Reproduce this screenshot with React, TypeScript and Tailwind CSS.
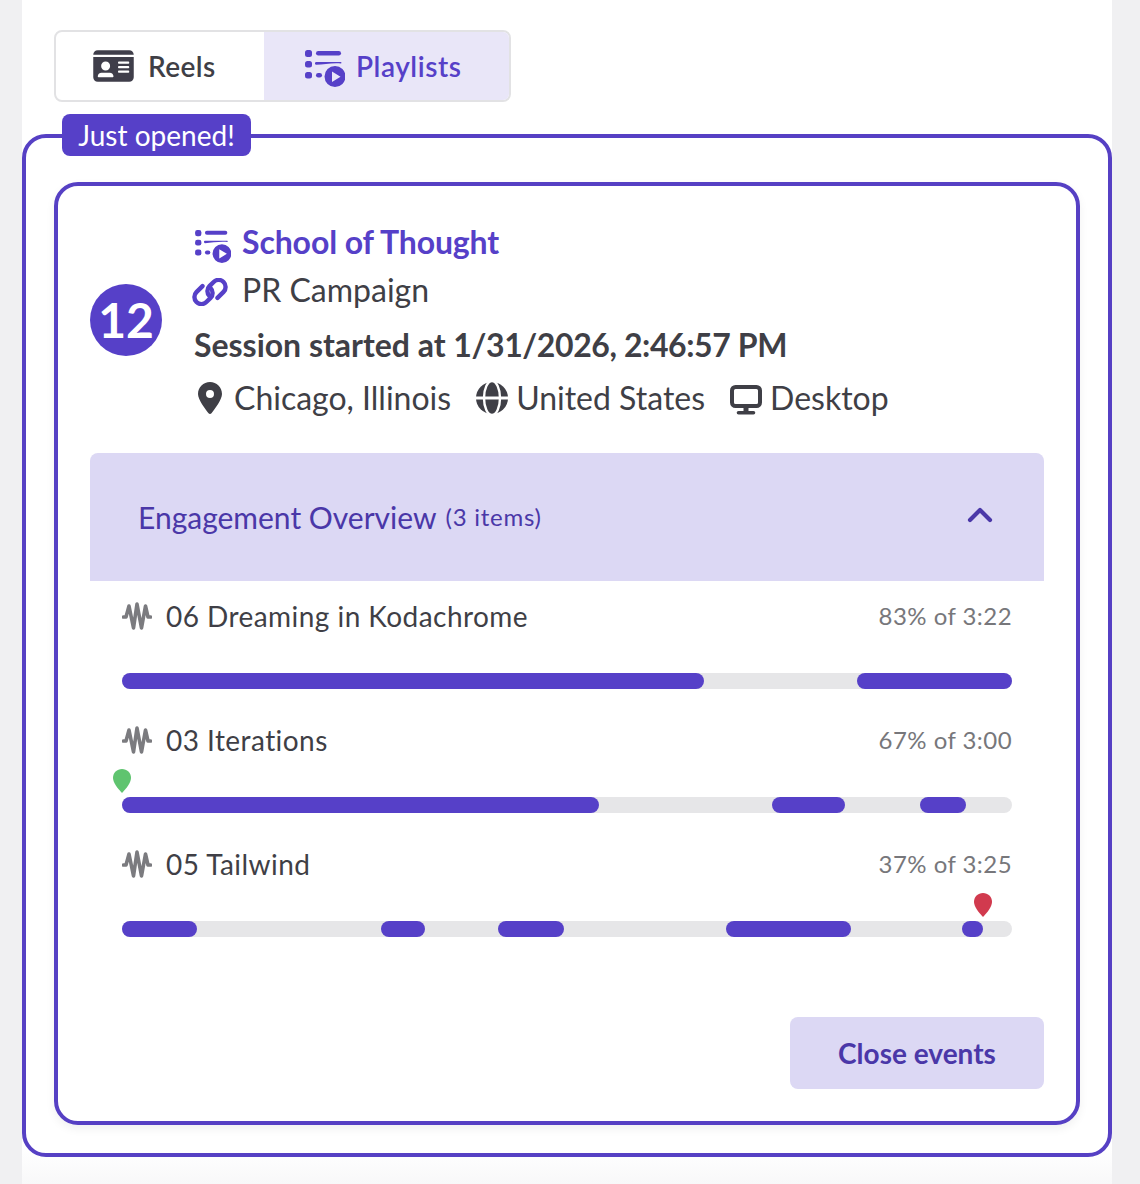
import { FaIdCard, FaLocationDot } from "react-icons/fa6";
import { LuChevronUp } from "react-icons/lu";

const PlaylistIcon = ({ className }: { className: string }) => (
  <svg viewBox="0 0 40 38" className={className} fill="currentColor">
    <rect x="0" y="1" width="7" height="7" rx="2.5" />
    <rect x="0" y="12" width="7" height="6.5" rx="2.5" />
    <rect x="0" y="23" width="7" height="6.5" rx="2.5" />
    <rect x="11" y="2" width="25" height="4.5" rx="2.25" />
    <path d="M11 13h25c.5 0 .6 1.5 0 1.6-8-1-17 1-25 1.2-1.4-.4-1.4-2.8 0-2.8z" />
    <rect x="11" y="24" width="6" height="4.5" rx="2.25" />
    <path
      fillRule="evenodd"
      d="M30 17a10.500 10.500 0 1 1 0 21 10.500 10.500 0 0 1 0-21zm-3 5.500v10.500l8.500-5.250z"
    />
  </svg>
);

const LinkIcon = () => (
  <svg viewBox="0 0 36 28" className="w-[36px] h-[28px] text-[#5640c8] mt-[4px]" fill="none" stroke="currentColor" strokeWidth="4.4" strokeLinecap="round">
    <path d="M17.450 18.050A7 7 0 0 1 17.450 8.150L21.650 3.950A7 7 0 0 1 31.550 13.850L25.500 19.900" />
    <path d="M18.550 9.950A7 7 0 0 1 18.550 19.850L14.350 24.050A7 7 0 0 1 4.450 14.150L10.500 8.100" />
  </svg>
);

const GlobeIcon = () => (
  <svg viewBox="0 0 32 32" className="w-[32px] h-[32px]">
    <circle cx="16" cy="16" r="16" fill="currentColor" />
    <ellipse cx="16" cy="16" rx="8" ry="17" fill="none" stroke="#fff" strokeWidth="2.400" />
    <path d="M0 16h32" stroke="#fff" strokeWidth="3" />
  </svg>
);

const WaveIcon = () => (
  <svg viewBox="0 0 30 28" className="w-[30px] h-[28px] text-[#7b7b7f] shrink-0" fill="none" stroke="currentColor" strokeWidth="3.6" strokeLinecap="round" strokeLinejoin="round">
    <path d="M1.500 15H4L7 4l4.500 22L15 2l4.500 24L23.500 4 26 15h2.500" />
  </svg>
);

const DesktopIcon = () => (
  <svg viewBox="0 0 32 30" className="w-[32px] h-[30px] mt-[3px]" fill="none" stroke="currentColor">
    <rect x="2" y="2" width="28" height="19" rx="3.500" strokeWidth="4" />
    <path d="M16 21v6" strokeWidth="5" />
    <path d="M8.500 27.800h15" strokeWidth="3.600" strokeLinecap="round" />
  </svg>
);

const tracks = [
  {
    name: "06 Dreaming in Kodachrome",
    stat: "83% of 3:22",
    segments: [[0, 582], [735, 890]],
  },
  {
    name: "03 Iterations",
    stat: "67% of 3:00",
    segments: [[0, 477], [650, 723], [798, 844]],
    pin: { at: 0, color: "text-[#5fc46f]" },
  },
  {
    name: "05 Tailwind",
    stat: "37% of 3:25",
    segments: [[0, 75], [259, 303], [376, 442], [604, 729], [840, 861]],
    pin: { at: 861, color: "text-[#d13a4e]" },
  },
];

const Pin = ({ at, color }: { at: number; color: string }) => (
  <svg
    viewBox="0 0 18 24"
    className={`absolute bottom-[20px] w-[18px] h-[24px] -ml-[9px] ${color}`}
    style={{ left: at }}
    fill="currentColor"
  >
    <path d="M9 0c5 0 9 3.800 9 8.800C18 14 13 20 9 24 5 20 0 14 0 8.800 0 3.800 4 0 9 0z" />
  </svg>
);

export default function App() {
  return (
    <div className="h-[1184px] bg-[#f0f0f2] overflow-hidden font-['Lato',sans-serif] text-[#3f3f46]">
      <div className="ml-[22px] w-[1090px] h-full bg-gradient-to-b from-white from-[97%] to-[#f8f8f9] pt-[30px]">
        <div className="ml-[32px] flex w-[457px] h-[72px] rounded-lg border-2 border-[#e2e2e4] overflow-hidden">
          <div className="w-[208px] flex items-center pl-[37px] gap-[14px] text-[28px] font-semibold tracking-[0.4px]">
            <FaIdCard className="w-[41px] h-[36px] text-[#3f3e4a]" />
            Reels
          </div>
          <div className="flex-1 bg-[#e9e6f8] flex items-center pl-[41px] gap-[11px] text-[28px] font-semibold tracking-[0.55px] text-[#5640c8]">
            <PlaylistIcon className="w-[40px] h-[38px] mt-[3px]" />
            Playlists
          </div>
        </div>

        <div className="relative mt-[32px] rounded-[24px] border-[4px] border-[#5640c4] px-[28px] pt-[44px] pb-[28px]">
          <div className="absolute left-[36px] -top-[24px] h-[42px] w-[189px] rounded-lg bg-[#5640c8] flex items-center justify-center text-[28px] text-white">
            Just opened!
          </div>

          <div className="rounded-[24px] border-[4px] border-[#5640c4] h-[943px] px-[32px] pt-[32px] shadow-[0_4px_10px_rgba(0,0,0,0.06)]">
            <div className="flex items-center">
              <div className="w-[72px] h-[72px] rounded-full bg-[#5640c8] flex items-center justify-center text-white text-[48px] font-bold shrink-0">
                12
              </div>
              <div className="ml-[32px]">
                <div className="flex items-center h-[48px] gap-[12px] text-[32px] font-bold tracking-[-0.12px] text-[#5640c8]">
                  <PlaylistIcon className="w-[36px] h-[34px] mt-[8px] ml-[1px] -mr-[1px]" />
                  School of Thought
                </div>
                <div className="flex items-center h-[48px] gap-[14px] text-[32px] -ml-[2px]">
                  <LinkIcon />
                  PR Campaign
                </div>
                <div className="mt-[1px] h-[60px] flex items-center text-[32px] font-bold whitespace-pre">
                  <span className="tracking-[-0.02px]">Session started at </span>
                  <span className="tracking-[-0.4px]">1/31/2026, 2:46:57 PM</span>
                </div>
                <div className="-mt-[1px] h-[48px] flex items-center text-[32px]">
                  <FaLocationDot className="w-[32px] h-[32px] mr-[8px]" />
                  Chicago, Illinois
                  <span className="ml-[25px] mr-[8px]"><GlobeIcon /></span>
                  United States
                  <span className="ml-[25px] mr-[8px]"><DesktopIcon /></span>
                  Desktop
                </div>
              </div>
            </div>

            <div className="mt-[31px] h-[128px] rounded-t-lg bg-[#dcd8f4] flex items-center justify-between pl-[48px] pr-[44px] text-[#4a37a8]">
              <div className="flex items-center gap-[9px]">
                <span className="text-[30px]">Engagement Overview</span>
                <span className="text-[24px] tracking-[0.75px]">(3 items)</span>
              </div>
              <LuChevronUp className="w-[40px] h-[40px] -mt-[4px]" strokeWidth={2.5} />
            </div>

            <div className="px-[32px]">
              {tracks.map((track) => (
                <div key={track.name} className="h-[124px] pt-[15px]">
                  <div className="flex items-center justify-between h-[40px]">
                    <div className="flex items-center gap-[14px] text-[28px] tracking-[0.45px]">
                      <WaveIcon />
                      {track.name}
                    </div>
                    <div className="text-[24px] tracking-[0.45px] text-[#77777b]">{track.stat}</div>
                  </div>
                  <div className="relative mt-[37px] h-[16px] rounded-full bg-[#e6e6e8]">
                    {track.segments.map(([from, to]) => (
                      <div
                        key={from}
                        className="absolute top-0 h-full rounded-full bg-[#5640c8]"
                        style={{ left: from, width: to - from }}
                      />
                    ))}
                    {track.pin && <Pin at={track.pin.at} color={track.pin.color} />}
                  </div>
                </div>
              ))}
            </div>

            <div className="mt-[64px] flex justify-end">
              <button className="w-[254px] h-[72px] rounded-lg bg-[#dcd8f4] text-[#4a37a8] text-[28px] font-bold">
                Close events
              </button>
            </div>
          </div>
        </div>
      </div>
    </div>
  );
}
